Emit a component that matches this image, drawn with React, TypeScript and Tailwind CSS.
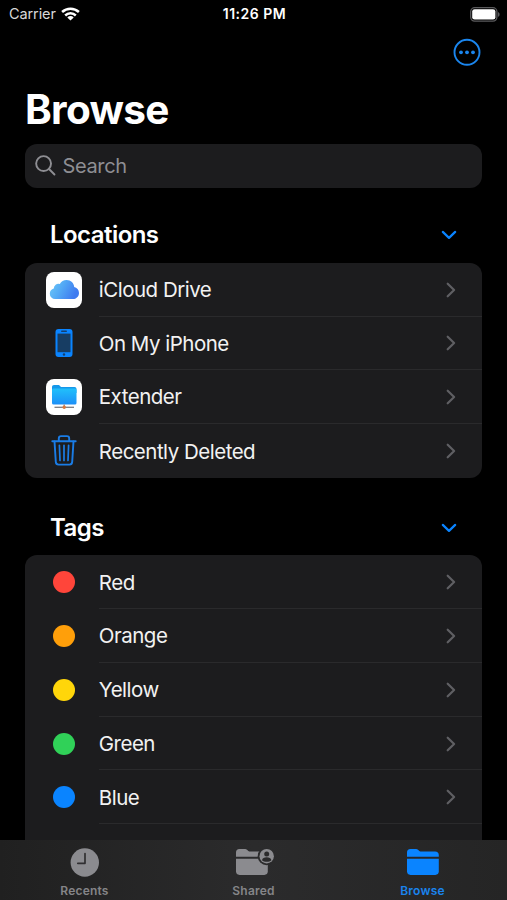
import type { ReactNode } from 'react';

function WifiIcon() {
  return (
    <svg width="19" height="14" viewBox="0 0 19 14" fill="none" stroke="#fff" strokeWidth="2.5">
      <path d="M1.1 5a12.2 12.2 0 0 1 16.8 0" />
      <path d="M4.2 8.5a7.6 7.6 0 0 1 10.6 0" />
      <path d="M9.5 13.6 6.3 10.6a4.7 4.7 0 0 1 6.4 0z" fill="#fff" stroke="none" />
    </svg>
  );
}

function BatteryIcon() {
  return (
    <svg width="30" height="15" viewBox="0 0 30 15">
      <rect x="0.7" y="0.7" width="26.2" height="13.4" rx="4" fill="none" stroke="#5a5a5c" strokeWidth="1.3" />
      <rect x="2.2" y="2.2" width="23.2" height="10.4" rx="2.4" fill="#fff" />
      <path d="M28 5v4.8c1-.4 1.6-1.3 1.6-2.4S29 5.4 28 5z" fill="#5a5a5c" />
    </svg>
  );
}

function MoreIcon() {
  return (
    <svg width="28" height="28" viewBox="0 0 28 28">
      <circle cx="14" cy="14.3" r="12.5" fill="none" stroke="#1b86ee" strokeWidth="1.9" />
      <circle cx="8" cy="14.3" r="1.9" fill="#1b86ee" />
      <circle cx="14" cy="14.3" r="1.9" fill="#1b86ee" />
      <circle cx="20" cy="14.3" r="1.9" fill="#1b86ee" />
    </svg>
  );
}

function SearchIcon() {
  return (
    <svg width="21" height="21" viewBox="0 0 22 22" fill="none" stroke="#8e8e93" strokeWidth="2" strokeLinecap="round">
      <circle cx="9" cy="9" r="7.8" />
      <path d="m14.7 14.7 5.7 5.7" />
    </svg>
  );
}

function ChevronDown() {
  return (
    <svg width="16" height="10" viewBox="0 0 16 10" fill="none" stroke="#0a84ff" strokeWidth="2.2" strokeLinecap="round" strokeLinejoin="round">
      <path d="m1.8 1.9 6.2 6 6.2-6" />
    </svg>
  );
}

function ChevronRight() {
  return (
    <svg width="10" height="16" viewBox="0 0 10 16" fill="none" stroke="#5f5f63" strokeWidth="2.2" strokeLinecap="round" strokeLinejoin="round">
      <path d="m1.7 1.7 6.4 6.3-6.4 6.3" />
    </svg>
  );
}

function CloudIcon() {
  return (
    <svg width="36" height="36" viewBox="0 0 36 36">
      <defs>
        <linearGradient id="cloud" x1="0" y1="0" x2="1" y2="0.35">
          <stop offset="0" stopColor="#6fcbf8" />
          <stop offset="0.5" stopColor="#52a8f5" />
          <stop offset="1" stopColor="#3f7bf0" />
        </linearGradient>
      </defs>
      <rect width="36" height="36" rx="8" fill="#fff" />
      <path
        d="M9.2 27a5.3 5.3 0 0 1-5.4-5.3c0-2.6 1.7-4.6 4-5.1a4.7 4.7 0 0 1 6-4.6 7.7 7.7 0 0 1 6.9-3.9c4.2 0 7.2 3.1 7.5 7 2.7.6 4.8 2.9 4.8 5.8 0 3.4-2.7 6.1-6.1 6.1z"
        fill="url(#cloud)"
      />
    </svg>
  );
}

function PhoneIcon() {
  return (
    <svg width="18" height="28" viewBox="0 0 18 28">
      <rect x="0.5" y="0" width="17" height="28" rx="3" fill="#0a84ff" />
      <rect x="2.5" y="4.6" width="13" height="18.6" fill="#173d63" />
      <rect x="6" y="1.4" width="6" height="1.6" rx="0.8" fill="#143f6e" />
      <circle cx="9" cy="25.5" r="1.2" fill="#143f6e" />
    </svg>
  );
}

function ExtenderIcon() {
  return (
    <svg width="36" height="36" viewBox="0 0 36 36">
      <defs>
        <linearGradient id="extender" x1="0" y1="0" x2="0" y2="1">
          <stop offset="0" stopColor="#21c0fb" />
          <stop offset="1" stopColor="#1c8ff8" />
        </linearGradient>
      </defs>
      <rect width="36" height="36" rx="8" fill="#fff" />
      <path d="M6 8c0-1.2.8-2 2-2h5l2 2h13.5c1.2 0 2 .8 2 2v4H6z" fill="#1598ea" />
      <rect x="6" y="9.6" width="24.5" height="16" rx="1.5" fill="url(#extender)" />
      <path d="M8.5 28.3h19.5" stroke="#7c7c80" strokeWidth="1.3" />
      <path d="M18.2 25.6v2.7" stroke="#a0806c" strokeWidth="1.3" />
      <circle cx="18.2" cy="28.3" r="1.7" fill="#d9773f" />
    </svg>
  );
}

function TrashIcon() {
  return (
    <svg width="26" height="31" viewBox="0 0 26 31" fill="none" stroke="#1a7ce6" strokeWidth="1.9" strokeLinecap="round" strokeLinejoin="round">
      <path d="M1.3 6.2h23.4" />
      <path d="M7.8 6V3.4c0-1.4.9-2.3 2.3-2.3h5.8c1.4 0 2.3.9 2.3 2.3V6" />
      <path d="m3.5 6.4 1.3 20.5c.1 1.6 1.1 2.7 2.7 2.7h11c1.6 0 2.6-1.1 2.7-2.7l1.3-20.5" />
      <path d="m8.4 10.3.6 15.2M13 10.3v15.2m4.6-15.2-.6 15.2" strokeWidth="1.7" />
    </svg>
  );
}

function ClockIcon() {
  return (
    <svg width="29" height="29" viewBox="0 0 29 29">
      <circle cx="14.8" cy="14.5" r="14.2" fill="#8b8b8f" />
      <path d="M15 5.5v9.8H7.8" fill="none" stroke="#302f31" strokeWidth="1.7" strokeLinecap="round" strokeLinejoin="round" />
    </svg>
  );
}

function FolderShape({ color }: { color: string }) {
  return (
    <g fill={color}>
      <path d="M0 7.8V3.5C0 1.3 1.2 0 3.4 0h5c1.3 0 2 .3 2.9 1.1l1 .8c.7.6 1.2.7 2.2.7h13.6c2.3 0 3.7 1.3 3.7 3.5v1.7z" />
      <path d="M0 9.7h31.8v12.6c0 2.3-1.3 3.6-3.5 3.6H3.5C1.3 25.9 0 24.6 0 22.3z" />
    </g>
  );
}

function SharedIcon() {
  return (
    <svg className="ml-[3px]" width="39" height="27" viewBox="0 0 39 27">
      <FolderShape color="#8b8b8f" />
      <circle cx="30.7" cy="7.2" r="9" fill="#2b2b2c" />
      <circle cx="30.7" cy="7.2" r="7.2" fill="#8b8b8f" />
      <circle cx="30.7" cy="4.9" r="2.5" fill="#2b2b2c" />
      <path d="M26 11.2c.5-2 2.2-2.9 4.7-2.9s4.2.9 4.7 2.9c-1.2 1-2.8 1.6-4.7 1.6s-3.5-.6-4.7-1.6z" fill="#2b2b2c" />
    </svg>
  );
}

const locations = [
  { label: 'iCloud Drive', icon: <CloudIcon /> },
  { label: 'On My iPhone', icon: <PhoneIcon /> },
  { label: 'Extender', icon: <ExtenderIcon /> },
  { label: 'Recently Deleted', icon: <TrashIcon /> },
];

const tags = [
  { label: 'Red', color: 'bg-[#ff453a]' },
  { label: 'Orange', color: 'bg-[#ff9f0a]' },
  { label: 'Yellow', color: 'bg-[#ffd60a]' },
  { label: 'Green', color: 'bg-[#30d158]' },
  { label: 'Blue', color: 'bg-[#0a84ff]' },
];

function SectionHeader({ title, className }: { title: string; className: string }) {
  return (
    <div className={`flex items-center justify-between px-[25px] ${className}`}>
      <h2 className="text-[24px] font-semibold leading-none tracking-[-0.55px]">{title}</h2>
      <ChevronDown />
    </div>
  );
}

function Row({ icon, label, last }: { icon: ReactNode; label: string; last?: boolean }) {
  return (
    <div className="flex h-[53.75px]">
      <div className="flex w-[73.8px] shrink-0 items-center justify-center pl-[5px]">{icon}</div>
      <div className={`flex flex-1 items-center justify-between pr-[26.5px] pt-px ${last ? '' : 'border-b border-[#2a2a2c]'}`}>
        <span className="pt-px text-[20.5px] leading-none tracking-[-0.5px] text-[#f2f2f2]">{label}</span>
        <ChevronRight />
      </div>
    </div>
  );
}

function Tab({ icon, label, active }: { icon: ReactNode; label: string; active?: boolean }) {
  return (
    <div className="flex flex-1 flex-col items-center">
      <div className="flex h-[45.5px] items-center justify-center">{icon}</div>
      <span className={`text-[12px] font-semibold leading-none tracking-[0.2px] ${active ? 'text-[#1a84ee]' : 'text-[#858588]'}`}>
        {label}
      </span>
    </div>
  );
}

export default function App() {
  return (
    <div className="flex h-[900px] w-[507px] flex-col overflow-hidden bg-black font-['Inter',sans-serif] text-white">
      <header className="grid h-7 shrink-0 grid-cols-3 items-center pl-[9px] pr-[7px]">
        <div className="flex items-center gap-[5px]">
          <span className="text-[14.5px] leading-none tracking-[-0.1px] text-[#d8d8d8]">Carrier</span>
          <WifiIcon />
        </div>
        <span className="text-center text-[14px] font-semibold leading-none tracking-[0.5px]">11:26 PM</span>
        <div className="flex justify-end">
          <BatteryIcon />
        </div>
      </header>
      <div className="flex h-12 shrink-0 items-center justify-end pr-[26px]">
        <MoreIcon />
      </div>
      <main className="min-h-0 flex-1 overflow-hidden px-[25px]">
        <h1 className="flex h-[68px] items-center text-[40.5px] font-bold leading-none tracking-[-0.7px]">Browse</h1>
        <div className="flex h-[43.5px] items-center gap-[7px] rounded-xl bg-[#1c1c1e] pl-[9.5px]">
          <SearchIcon />
          <span className="pt-px text-[20px] leading-none tracking-[-0.35px] text-[#8e8e93]">Search</span>
        </div>
        <section>
          <SectionHeader title="Locations" className="h-[75.3px] pt-5" />
          <div className="rounded-xl bg-[#1c1c1e]">
            {locations.map((item, i) => (
              <Row key={item.label} icon={item.icon} label={item.label} last={i === locations.length - 1} />
            ))}
          </div>
        </section>
        <section>
          <SectionHeader title="Tags" className="h-[77.7px] pt-[23px]" />
          <div className="rounded-t-xl bg-[#1c1c1e] pb-4">
            {tags.map((tag) => (
              <Row key={tag.label} label={tag.label} icon={<span className={`size-[22px] rounded-full ${tag.color}`} />} />
            ))}
          </div>
        </section>
      </main>
      <nav className="flex h-[60.5px] shrink-0 bg-linear-to-r from-[#202020] via-[#2b2b2c] to-[#252525]">
        <Tab icon={<ClockIcon />} label="Recents" />
        <Tab icon={<SharedIcon />} label="Shared" />
        <Tab
          icon={
            <svg width="32" height="27" viewBox="0 0 32 27">
              <FolderShape color="#0a84ff" />
            </svg>
          }
          label="Browse"
          active
        />
      </nav>
    </div>
  );
}
